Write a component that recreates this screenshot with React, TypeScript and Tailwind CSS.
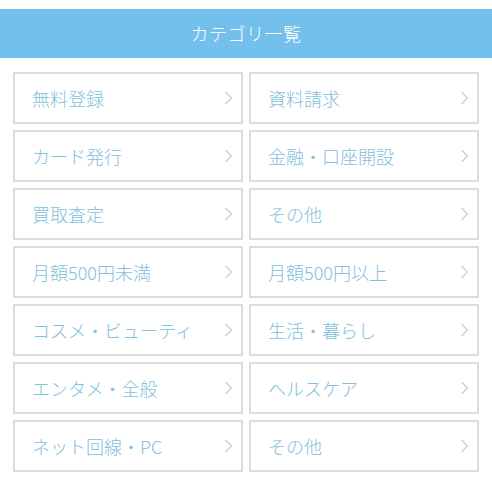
const categories: [string, string][] = [
  ["無料登録", "資料請求"],
  ["カード発行", "金融・口座開設"],
  ["買取査定", "その他"],
  ["月額500円未満", "月額500円以上"],
  ["コスメ・ビューティ", "生活・暮らし"],
  ["エンタメ・全般", "ヘルスケア"],
  ["ネット回線・PC", "その他"],
];

function CategoryCell({ label }: { label: string }) {
  return (
    <a
      href="#"
      className="flex h-[52px] items-center justify-between border-2 border-[#dcdcdc] bg-white pl-[17px] pr-[8px]"
    >
      <span className="text-[18px] font-light leading-none text-[#82c0dc]">
        {label}
      </span>
      <svg
        width="9"
        height="14"
        viewBox="0 0 9 14"
        fill="none"
        stroke="#b8cfdc"
        strokeWidth="1.1"
        className="shrink-0"
      >
        <path d="M1.5 1 L7.5 7 L1.5 13" />
      </svg>
    </a>
  );
}

export default function App() {
  return (
    <div
      className="min-h-[480px] bg-white pt-[9px]"
      style={{ fontFamily: '"Noto Sans CJK JP", "Noto Sans", sans-serif' }}
    >
      <div className="flex h-[49px] items-center justify-center bg-[#74c0ec]">
        <h2 className="text-[18px] font-light tracking-[0.5px] text-white">
          カテゴリ一覧
        </h2>
      </div>
      <div className="mt-[14px] grid grid-cols-2 gap-[6px] px-[13px]">
        {categories.flat().map((label, i) => (
          <CategoryCell key={i} label={label} />
        ))}
      </div>
    </div>
  );
}
